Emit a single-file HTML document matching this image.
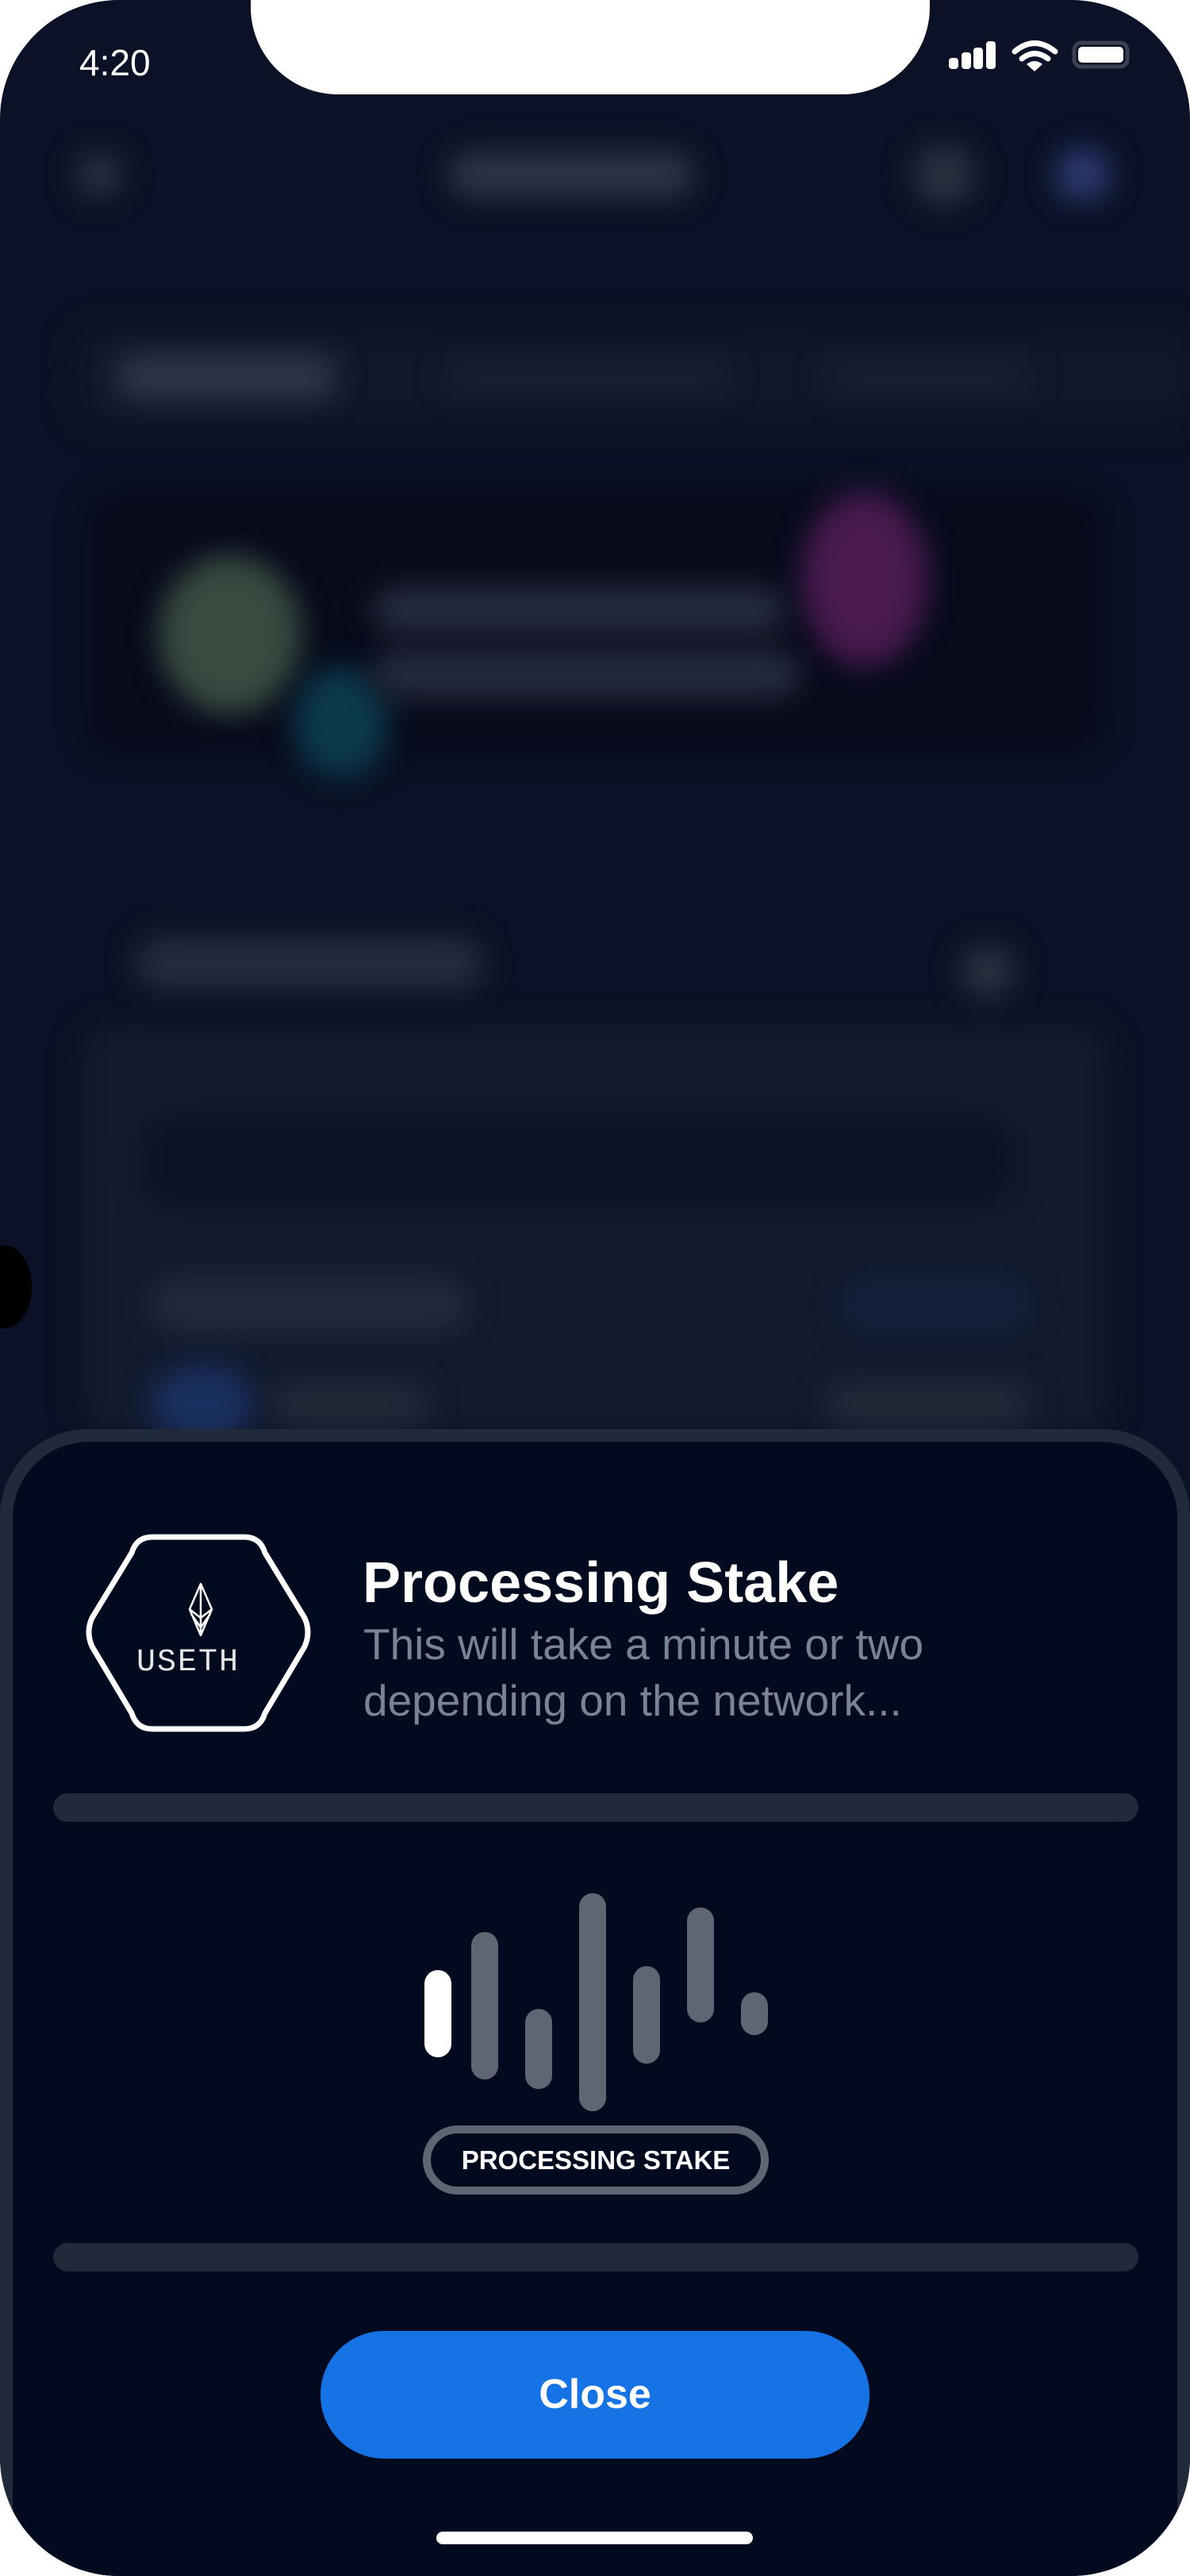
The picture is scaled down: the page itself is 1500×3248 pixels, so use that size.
<!DOCTYPE html>
<html><head><meta charset="utf-8"><style>
*{margin:0;padding:0;box-sizing:border-box}
html,body{width:1500px;height:3248px;background:#fff;overflow:hidden;font-family:"Liberation Sans",sans-serif}
.phone{position:absolute;left:0;top:0;width:1500px;height:3248px;background:#0b1126;border-radius:150px;overflow:hidden}
.notch{position:absolute;left:316px;top:-10px;width:856px;height:129px;background:#fff;border-radius:0 0 110px 110px}
.blur{position:absolute;filter:blur(18px);border-radius:40px}
.sheet{position:absolute;left:0;top:1802px;width:1500px;height:1446px;background:#212a3b;border-radius:110px 110px 0 0}
.inner{position:absolute;left:16px;top:16px;width:1468px;height:1500px;background:#010a1e;border-radius:96px 96px 0 0}
.bar{position:absolute;left:67px;width:1368px;height:36px;background:#212a3b;border-radius:18px}
.w{position:absolute;width:34px;border-radius:17px;background:#5f6673}
</style></head><body>
<div class="phone">
  <div class="blur" style="left:95px;top:190px;width:60px;height:60px;background:#2a3040"></div>
  <div class="blur" style="left:565px;top:190px;width:310px;height:60px;background:#2e3446"></div>
  <div class="blur" style="left:1150px;top:180px;width:80px;height:80px;background:#2a3040"></div>
  <div class="blur" style="left:1330px;top:185px;width:70px;height:70px;background:#2c3a70;border-radius:50%"></div>
  <div class="blur" style="left:90px;top:410px;width:1420px;height:130px;background:#111729"></div>
  <div class="blur" style="left:145px;top:445px;width:280px;height:60px;background:#2f3547"></div>
  <div class="blur" style="left:560px;top:455px;width:360px;height:40px;background:#1a2033"></div>
  <div class="blur" style="left:1040px;top:455px;width:260px;height:40px;background:#1a2033"></div>
  <div class="blur" style="left:110px;top:620px;width:1280px;height:330px;background:#070b1c"></div>
  <div class="blur" style="left:200px;top:700px;width:180px;height:200px;background:#3a4a40;border-radius:50%"></div>
  <div class="blur" style="left:370px;top:840px;width:120px;height:140px;background:#0c3a4c;border-radius:50%"></div>
  <div class="blur" style="left:1010px;top:620px;width:160px;height:220px;background:#4a1a50;border-radius:50%"></div>
  <div class="blur" style="left:470px;top:740px;width:520px;height:60px;background:#262c3e"></div>
  <div class="blur" style="left:470px;top:820px;width:540px;height:60px;background:#262c3e"></div>
  <div class="blur" style="left:170px;top:1180px;width:440px;height:70px;background:#262c3e"></div>
  <div class="blur" style="left:1210px;top:1190px;width:70px;height:70px;background:#2a3040"></div>
  <div class="blur" style="left:100px;top:1290px;width:1300px;height:520px;background:#121a2e"></div>
  <div class="blur" style="left:180px;top:1410px;width:1100px;height:110px;background:#0d1326"></div>
  <div class="blur" style="left:190px;top:1610px;width:400px;height:70px;background:#242a3c"></div>
  <div class="blur" style="left:1060px;top:1610px;width:240px;height:70px;background:#15203a"></div>
  <div class="blur" style="left:190px;top:1720px;width:130px;height:100px;background:#1a3060;border-radius:50%"></div>
  <div class="blur" style="left:340px;top:1740px;width:200px;height:60px;background:#222838"></div>
  <div class="blur" style="left:1040px;top:1740px;width:260px;height:60px;background:#222838"></div>
  <div style="position:absolute;left:-30px;top:1570px;width:70px;height:105px;background:#000;border-radius:50%"></div>

  <div class="notch"></div>
  <div style="position:absolute;left:100px;top:52px;color:#fff;font-size:46px">4:20</div>
  <svg style="position:absolute;left:1190px;top:48px" width="250" height="45" viewBox="1190 48 250 45">
    <rect x="1196" y="73" width="12" height="14" rx="4" fill="#fff"/>
    <rect x="1212" y="66" width="12" height="21" rx="4" fill="#fff"/>
    <rect x="1227" y="60" width="12" height="27" rx="4" fill="#fff"/>
    <rect x="1243" y="52" width="12" height="35" rx="4" fill="#fff"/>
    <path d="M1279 65 Q1304 44 1330 65" stroke="#fff" stroke-width="7" fill="none" stroke-linecap="round"/>
    <path d="M1288 74 Q1304 61 1321 74" stroke="#fff" stroke-width="7" fill="none" stroke-linecap="round"/>
    <path d="M1294 81 L1304 90 L1314 81 Q1304 73 1294 81Z" fill="#fff"/>
    <rect x="1354" y="54" width="67" height="30" rx="9" fill="none" stroke="#3a4050" stroke-width="5"/>
    <rect x="1359" y="59" width="57" height="20" rx="5" fill="#fff"/>
  </svg>

  <div class="sheet"><div class="inner"></div></div>

  <svg style="position:absolute;left:100px;top:1925px" width="300" height="270" viewBox="100 1925 300 270">
    <path d="M192 1938 L308 1938 Q328 1938 334 1958 L384 2040 Q392 2058 384 2076 L334 2160 Q328 2180 308 2180 L192 2180 Q172 2180 166 2160 L116 2076 Q108 2058 116 2040 L166 1958 Q172 1938 192 1938Z" fill="none" stroke="#fff" stroke-width="7"/>
    <path d="M253 1997 L239 2029 L253 2062 L267 2029 Z M239 2029 L253 2040 L267 2029 M253 1997 L253 2062 M241 2035 L253 2052 L265 2035" fill="none" stroke="#fff" stroke-width="2.5" stroke-linejoin="round"/>
  </svg>
  <div style="position:absolute;left:172px;top:2074px;font-family:'Liberation Mono',monospace;font-size:40px;color:#e6e6e6;letter-spacing:2px">USETH</div>

  <div style="position:absolute;left:457px;top:1955px;color:#fff;font-size:72px;font-weight:bold">Processing Stake</div>
  <div style="position:absolute;left:458px;top:2038px;color:#7a8394;font-size:55px;line-height:71px">This will take a minute or two<br>depending on the network...</div>

  <div class="bar" style="top:2261px"></div>
  <div class="w" style="left:535px;top:2484px;height:110px;background:#fff"></div>
  <div class="w" style="left:594px;top:2436px;height:186px"></div>
  <div class="w" style="left:662px;top:2533px;height:101px"></div>
  <div class="w" style="left:730px;top:2387px;height:275px"></div>
  <div class="w" style="left:798px;top:2479px;height:123px"></div>
  <div class="w" style="left:866px;top:2405px;height:145px"></div>
  <div class="w" style="left:934px;top:2512px;height:54px"></div>
  <div style="position:absolute;left:533px;top:2680px;width:436px;height:87px;border:10px solid #5f6673;border-radius:44px;color:#fff;font-weight:bold;font-size:33px;text-align:center;line-height:67px">PROCESSING STAKE</div>
  <div class="bar" style="top:2828px"></div>
  <div style="position:absolute;left:404px;top:2939px;width:692px;height:161px;background:#1673e6;border-radius:80px;color:#fff;font-weight:bold;font-size:52px;text-align:center;line-height:161px">Close</div>
  <div style="position:absolute;left:550px;top:3192px;width:399px;height:16px;background:#fff;border-radius:8px"></div>
</div>
</body></html>
